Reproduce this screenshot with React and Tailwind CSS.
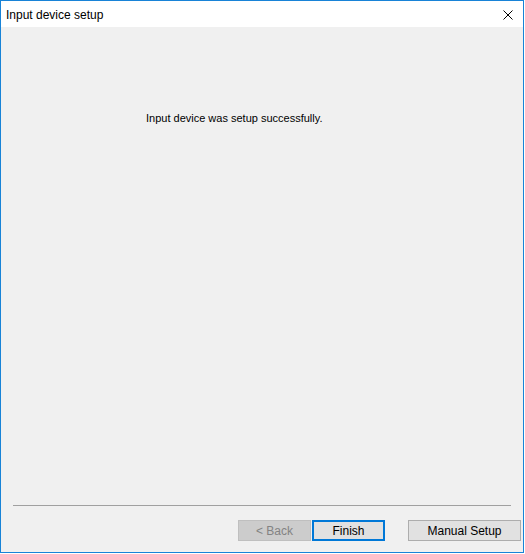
export default function App() {
  return (
    <div className="w-[525px] h-[554px] bg-white" style={{ fontFamily: '"Liberation Sans", Arial, sans-serif' }}>
      <div className="w-[524px] h-[553px] border border-[#1883d7] flex flex-col">
        {/* title bar */}
        <div className="h-[26px] bg-white flex items-center justify-between">
          <span className="pl-[5px] pt-[1px] text-[12px] text-black">Input device setup</span>
          <svg width="10" height="10" viewBox="0 0 10 10" className="mr-[10px] mt-[1px]">
            <path d="M0.5 0.5 L9.5 9.5 M9.5 0.5 L0.5 9.5" stroke="#000" strokeWidth="1" />
          </svg>
        </div>

        {/* body */}
        <div className="flex-1 bg-[#f0f0f0] flex flex-col">
          <div className="flex-1 pt-[84px] pl-[145px]">
            <p className="text-[11px] leading-[14px] text-black">Input device was setup successfully.</p>
          </div>
          <div className="mx-[12px] h-px bg-[#a0a0a0]" />
          <div className="h-[46px] flex items-start pt-[14px] pl-[237px]">
            <button className="w-[73px] h-[21px] bg-[#cccccc] border border-[#bfbfbf] text-[12px] text-[#838383]">
              &lt; Back
            </button>
            <button className="ml-px w-[73px] h-[21px] bg-[#e1e1e1] border-2 border-[#0078d7] text-[12px] text-black">
              Finish
            </button>
            <button className="ml-[23px] w-[113px] h-[21px] bg-[#e1e1e1] border border-[#adadad] text-[12px] text-black">
              Manual Setup
            </button>
          </div>
        </div>
      </div>
    </div>
  );
}
